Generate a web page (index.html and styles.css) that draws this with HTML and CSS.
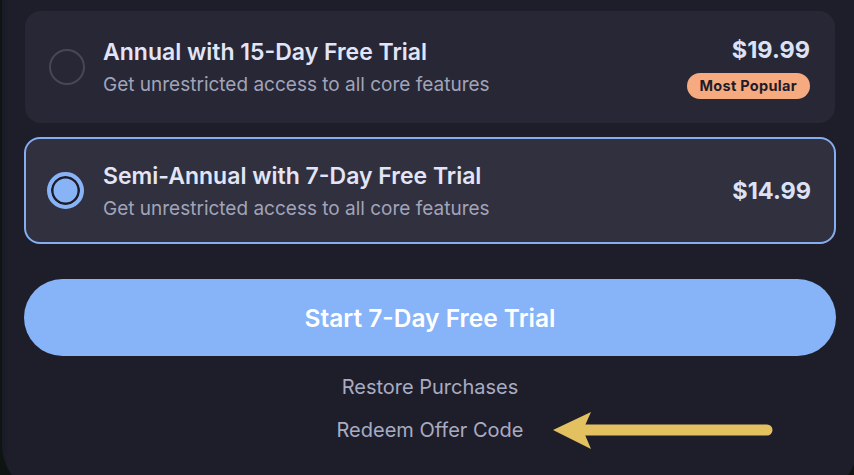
FILE: index.html
```html
<!DOCTYPE html>
<html lang="en">
<head>
  <meta charset="UTF-8" />
  <meta name="viewport" content="width=device-width, initial-scale=1.0"/>
  <title>Paywall</title>
  <link rel="stylesheet" href="styles.css">
</head>
<body>
  <div class="screen">
    <div class="plans">
      <div class="plan">
        <span class="radio"></span>
        <div class="plan-text">
          <div class="plan-title">Annual with 15-Day Free Trial</div>
          <div class="plan-sub">Get unrestricted access to all core features</div>
        </div>
        <div class="plan-side">
          <div class="price">$19.99</div>
          <span class="badge">Most Popular</span>
        </div>
      </div>

      <div class="plan selected">
        <span class="radio"></span>
        <div class="plan-text">
          <div class="plan-title">Semi-Annual with 7-Day Free Trial</div>
          <div class="plan-sub">Get unrestricted access to all core features</div>
        </div>
        <div class="plan-side">
          <div class="price">$14.99</div>
        </div>
      </div>
    </div>

    <button class="cta">Start 7-Day Free Trial</button>

    <div class="links">
      <a class="link">Restore Purchases</a>
      <a class="link">Redeem Offer Code</a>
    </div>

    <!-- annotation arrow pointing at the redeem link -->
    <svg class="arrow" width="230" height="44" viewBox="0 0 230 44">
      <line x1="30" y1="21" x2="214" y2="21" stroke="#e3c160" stroke-width="11" stroke-linecap="round"/>
      <polygon points="0,21 38,3 30,21 38,40" fill="#e3c160"/>
    </svg>
  </div>
</body>
</html>
```

FILE: styles.css
```css
body {
  margin: 0;
  padding: 0;
  background-color: #0e1411;
  font-family: Inter, "Liberation Sans", sans-serif;
  overflow: hidden;
  height: 475px;
}

.screen {
  position: relative;
  width: 856px;
  height: 495px;
  margin-left: 2px;
  background: linear-gradient(90deg, #1a1a25 0, #1e1e2b 7px);
  border-radius: 0 0 50px 50px;
  box-sizing: border-box;
  padding: 11px 0 0 22px;
}

.plans {
  display: flex;
  flex-direction: column;
  gap: 14px;
  width: 812px;
}

.plan {
  display: flex;
  align-items: center;
  height: 112px;
  box-sizing: border-box;
  padding: 0 23px 0 22px;
  background-color: #272736;
  border-radius: 16px;
  border: 2px solid transparent;
  margin: 0 1px;
}

.plan.selected {
  height: 107px;
  margin: 0;
  padding: 0 23px 0 21px;
  background-color: #30303f;
  border-color: #86adf0;
}

.radio {
  width: 36px;
  height: 36px;
  box-sizing: border-box;
  border-radius: 50%;
  border: 2px solid #474757;
  flex-shrink: 0;
}

.plan.selected .radio {
  width: 37px;
  height: 37px;
  border: 4px solid #89b3f7;
  background-color: #89b3f7;
  box-shadow: inset 0 0 0 2.5px #1d1d28;
}

.plan-text {
  flex: 1;
  margin-left: 18px;
}

.plan.selected .plan-text {
  margin-left: 19px;
}

.plan-title {
  font-size: 23px;
  font-weight: 600;
  color: #e2e5f7;
  line-height: 28px;
}

.plan-sub {
  margin-top: 7px;
  font-size: 19px;
  line-height: 23px;
  color: #a1a4b9;
}

.plan-side {
  display: flex;
  flex-direction: column;
  align-items: flex-end;
}

.price {
  font-size: 23.5px;
  font-weight: 700;
  color: #dde1f5;
  line-height: 29px;
}

.badge {
  margin-top: 9px;
  background-color: #f6aa7f;
  color: #1d1d2a;
  font-size: 14.5px;
  font-weight: 700;
  line-height: 18px;
  padding: 4px 13px 4px 13px;
  border-radius: 14px;
  letter-spacing: 0.3px;
}

.cta {
  display: block;
  width: 812px;
  height: 77px;
  margin: 35px 0 0 0;
  border: none;
  border-radius: 39px;
  background-color: #87b3f8;
  color: #ffffff;
  font-family: Inter, "Liberation Sans", sans-serif;
  font-size: 24.5px;
  font-weight: 600;
}

.links {
  display: flex;
  flex-direction: column;
  align-items: center;
  width: 812px;
  margin-top: 19px;
  gap: 19px;
}

.link {
  font-size: 20px;
  color: #a9acc1;
  line-height: 24px;
}

.arrow {
  position: absolute;
  left: 551px;
  top: 409px;
}
```
